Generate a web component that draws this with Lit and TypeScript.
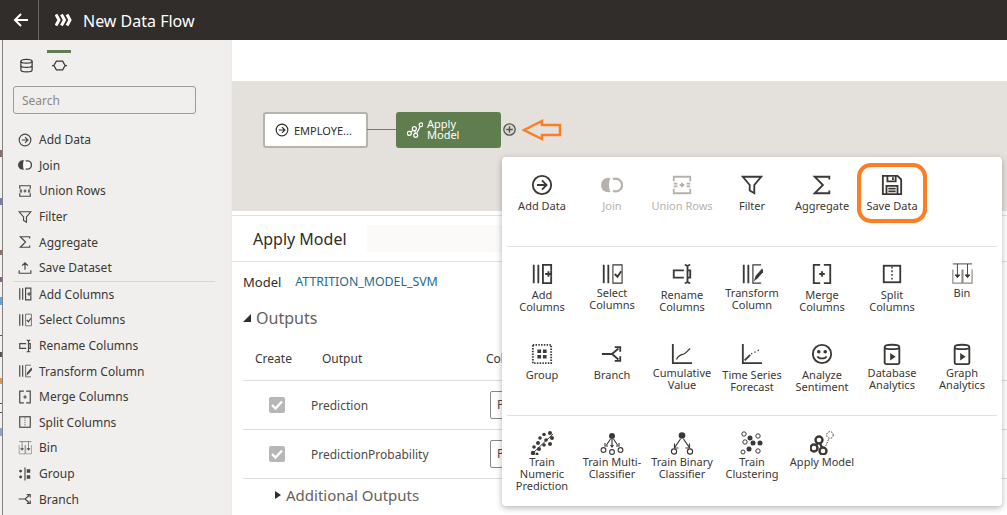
import { LitElement, html, css, svg } from "lit";
import { customElement } from "lit/decorators.js";

const ICONS: Record<string, unknown> = {
    addData: svg`<circle cx="12" cy="12" r="10" /><path d="M6.500 12h10M12 7l5 5-5 5" />`,
    join: svg`<circle cx="8" cy="12" r="8" fill="currentColor" stroke="none" /><circle cx="16" cy="12" r="7" fill="#fff" stroke-width="2.400" /><ellipse cx="11.500" cy="12" rx="2.800" ry="8" fill="#fff" stroke="none" />`,
    union: svg`<path d="M3 8V3h18v5M3 16v5h18v-5M3 10.500h4M17 10.500h4M3 13.500h4M17 13.500h4M12 9.500v5M9.500 12h5" />`,
    filter: svg`<path d="M2 3h20l-7.500 9v9l-5-3v-6z" />`,
    sigma: svg`<path d="M20 6V3H4l9 9-9 9h16v-3" />`,
    save: svg`<path d="M3 2h15l4 4v16H2V2zM7 2v6h9V2M13 3.500v3M6 22v-9h12v9M8 16h8M8 19h8" />`,
    upload: svg`<path d="M12 15V3M7 8l5-5 5 5M2 16v5h20v-5" />`,
    addColumns: svg`<path d="M3 2v20M8 2v20" /><path d="M22 8V2H13v20h9v-7" /><path d="M22 8v7M15.500 12h6M19 9v6" />`,
    selectColumns: svg`<path d="M3 2v20M8 2v20" /><path stroke-width="1.200" d="M13 2h10v20H13z" /><path d="M15 12l3 3 4-6" />`,
    renameColumns: svg`<path d="M14 8H3v8h11" /><path d="M15 2c1.500 0 3 1 3 2v16c0 1-1.500 2-3 2M21 2c-1.500 0-3 1-3 2v16c0 1 1.500 2 3 2" /><path d="M18 8h3v8h-3" />`,
    transformColumn: svg`<path d="M3 2v20M8 2v20" /><path stroke-width="1.300" d="M22 2H13v20h9" /><path d="M14 20l2-6 7-8 2 3-7 8z" fill="currentColor" stroke="none" />`,
    mergeColumns: svg`<path d="M10 2H3v20h7M14 2h7v20h-7M12 9v6M9 12h6" />`,
    splitColumns: svg`<rect x="3" y="3" width="18" height="18" /><path d="M12 4v16" stroke-width="1.600" stroke-dasharray="2 2" />`,
    bin: svg`<g stroke-width="1"><path d="M2 1h21M7 1v12M18 1v12" /><path d="M2 7v15h10V7M13 7v15h10V7" stroke="#8f8b87" stroke-width="1.300" /><path d="M4.500 13h5l-2.500 3zM15.500 13h5l-2.500 3z" fill="currentColor" /></g>`,
    group: svg`<rect x="2" y="2" width="20" height="20" stroke-dasharray="1.600 1.400" /><path d="M7 7h4v4H7zM13 7h4v4h-4zM7 13h4v4H7zM13 13h4v4h-4z" fill="currentColor" stroke="none" />`,
    groupSide: svg`<path d="M12 1v22" /><circle cx="4.500" cy="7" r="2.500" fill="currentColor" stroke="none" /><circle cx="4.500" cy="17" r="2.500" fill="currentColor" stroke="none" /><path d="M15 4h6v6h-6zM15 14h6v6h-6z" fill="currentColor" stroke="none" />`,
    branch: svg`<path d="M1 12h11l7-6M12 12l7 6M15 4.500h6v5M15 19.500h6v-5" />`,
    cumulative: svg`<path d="M2 1v21h21" /><path stroke-width="1.300" d="M6 18c2-5 5-5 8-6s4-4 7-6" />`,
    forecast: svg`<path d="M2 1v21h21" /><path d="M4 19l6-6" /><path d="M11 12l10-5" stroke-width="1.500" stroke-dasharray="1.500 2.500" />`,
    sentiment: svg`<circle cx="12" cy="12" r="10" /><circle cx="8.500" cy="9.500" r="1" fill="currentColor" /><circle cx="15.500" cy="9.500" r="1" fill="currentColor" /><path d="M7 14.500c1.500 3 8.500 3 10 0" />`,
    cylinderPlay: svg`<path d="M4 4.500c0-3.500 16-3.500 16 0V21a2 2 0 0 1-2 2H6a2 2 0 0 1-2-2zM4 4.500c0 3 16 3 16 0" /><path d="M10 11l6 4-6 4z" fill="currentColor" stroke="none" />`,
    database: svg`<ellipse cx="12" cy="5" rx="9" ry="3" /><path d="M3 5v14c0 4 18 4 18 0V5M3 12c0 4 18 4 18 0" />`,
    process: svg`<path d="M7 5h10l4 7-4 7H7l-4-7zM0 12h3M21 12h3" />`,
    numeric: svg`<path d="M3 22L23 3" stroke-width="1" /><g fill="currentColor" stroke="none"><circle cx="20" cy="2" r="2" /><circle cx="14" cy="3.500" r="1.800" /><circle cx="22" cy="7" r="2" /><circle cx="10" cy="7" r="1.800" /><circle cx="16" cy="9" r="1.800" /><circle cx="8" cy="12" r="2" /><circle cx="20" cy="13" r="2" /><circle cx="14" cy="14" r="1.800" /><circle cx="4" cy="16" r="1.800" /><circle cx="9" cy="18" r="2" /><circle cx="3" cy="22" r="2.200" /><circle cx="7" cy="23" r="1.500" /></g>`,
    multi: svg`<circle cx="12" cy="5" r="3" fill="currentColor" stroke="none" /><g stroke-width="1.100"><path d="M12 8v8M10.500 8l-4 6M13.500 8l4 6M5 12v3h3M16 15h3v-3M10.500 14l1.500 2 1.500-2" /><circle cx="3.500" cy="19" r="2.400" /><circle cx="12" cy="21" r="2.400" /><circle cx="20.500" cy="19" r="2.400" /></g>`,
    binary: svg`<circle cx="12" cy="4.500" r="3.300" fill="currentColor" stroke="none" /><g stroke-width="1.200"><path d="M10.500 8L5 16M13.500 8l5.500 8M4.500 12.500V17h4M15.500 17h4v-4.500" /><circle cx="4" cy="20.500" r="2.600" /><circle cx="20" cy="20.500" r="2.600" /></g>`,
    clustering: svg`<g stroke-width="1"><circle cx="4" cy="3" r="2.200" /><circle cx="18" cy="5" r="2.200" /><circle cx="5" cy="11" r="2.200" /><circle cx="3" cy="21" r="2" /><circle cx="18" cy="20" r="2.200" /></g><g fill="currentColor" stroke="none"><circle cx="10" cy="7" r="2.500" /><circle cx="13" cy="12" r="2.500" /><circle cx="20" cy="12" r="2.500" /><circle cx="9" cy="18" r="2.500" /></g>`,
    applyModel: svg`<g stroke-width="2.400"><circle cx="9" cy="9" r="3.500" /><circle cx="4" cy="17" r="3.500" /><circle cx="13" cy="20" r="3.500" /><path d="M7.500 12.500l-1.500 1.500M10 12.500l2 4" /></g><circle cx="20" cy="4" r="3.300" stroke-width="1" stroke-dasharray="1.500 1.200" /><path d="M18.500 8.500l-3 7" stroke-width="1" stroke-dasharray="1.500 1.200" />`,
    nodeModel: svg`<g stroke-width="1.800"><circle cx="11" cy="10" r="3" /><circle cx="3.500" cy="17" r="3" /><circle cx="13" cy="20" r="3" /><circle cx="21" cy="4" r="2.800" /><path d="M9 12.500l-3.500 2.500M11.500 13l1 4M14 18l6-11.500" /></g>`,
};

const icon = (name: string) =>
    html`<svg class="ic" viewBox="0 0 24 24" fill="none" stroke="currentColor" stroke-width="2">${ICONS[name]}</svg>`;

const SIDE_TOP = [
    ["addData", "Add Data"],
    ["join", "Join"],
    ["union", "Union Rows"],
    ["filter", "Filter"],
    ["sigma", "Aggregate"],
    ["upload", "Save Dataset"],
];

const SIDE_BOTTOM = [
    ["addColumns", "Add Columns"],
    ["selectColumns", "Select Columns"],
    ["renameColumns", "Rename Columns"],
    ["transformColumn", "Transform Column"],
    ["mergeColumns", "Merge Columns"],
    ["splitColumns", "Split Columns"],
    ["bin", "Bin"],
    ["groupSide", "Group"],
    ["branch", "Branch"],
];

// [icon, label, flag]
const STEPS_A = [
    ["addData", "Add Data"],
    ["join", "Join", "off"],
    ["union", "Union Rows", "off"],
    ["filter", "Filter"],
    ["sigma", "Aggregate"],
    ["save", "Save Data"],
];

const STEPS_B = [
    ["addColumns", "Add\nColumns"],
    ["selectColumns", "Select\nColumns", "lift"],
    ["renameColumns", "Rename\nColumns"],
    ["transformColumn", "Transform\nColumn", "lift"],
    ["mergeColumns", "Merge\nColumns"],
    ["splitColumns", "Split\nColumns"],
    ["bin", "Bin", "lift"],
    ["group", "Group"],
    ["branch", "Branch"],
    ["cumulative", "Cumulative\nValue", "lift"],
    ["forecast", "Time Series\nForecast"],
    ["sentiment", "Analyze\nSentiment"],
    ["cylinderPlay", "Database\nAnalytics", "lift"],
    ["cylinderPlay", "Graph\nAnalytics", "lift"],
];

const STEPS_C = [
    ["numeric", "Train\nNumeric\nPrediction"],
    ["multi", "Train Multi-\nClassifier"],
    ["binary", "Train Binary\nClassifier"],
    ["clustering", "Train\nClustering"],
    ["applyModel", "Apply Model"],
];

const checkMark = html`<div class="check">
    <svg class="ic" viewBox="0 0 16 16" fill="none" stroke="currentColor" stroke-width="2.400"><path d="M3 8l3.500 3.500L13 4.500" /></svg>
</div>`;

@customElement("app-root")
export class AppRoot extends LitElement {
    static styles = css`
        :host {
            display: block;
            position: relative;
            width: 1007px;
            height: 515px;
            overflow: hidden;
            background: #fff;
            font-family: "Noto Sans", sans-serif;
            color: #312d2a;
        }
        .ic {
            display: block;
            width: 100%;
            height: 100%;
        }
        .header {
            height: 40px;
            background: #312d2a;
            color: #fff;
            display: flex;
            align-items: center;
        }
        .back {
            width: 39px;
            height: 40px;
            box-sizing: border-box;
            border-right: 1px solid #6b6764;
            padding-left: 3px;
            display: flex;
            align-items: center;
            justify-content: center;
        }
        .back svg {
            width: 16px;
            height: 16px;
        }
        .logo {
            width: 17px;
            height: 14px;
            margin: 0 11px 0 16px;
        }
        .title {
            font-size: 16px;
            padding-top: 1px;
        }
        .body {
            display: flex;
            height: 475px;
        }
        /* sliver of the page behind the drawer */
        .strip {
            width: 3px;
            box-sizing: border-box;
            border-right: 1px solid #85827f;
            background:
                linear-gradient(#8f6a6a, #8f6a6a) 0 110px / 2px 7px no-repeat,
                linear-gradient(#6f7fb0, #6f7fb0) 0 158px / 2px 7px no-repeat,
                linear-gradient(#8a7568, #8a7568) 0 210px / 2px 5px no-repeat,
                linear-gradient(#86608f, #86608f) 0 237px / 2px 5px no-repeat,
                linear-gradient(#5fa3d8, #5fa3d8) 0 257px / 2px 8px no-repeat,
                linear-gradient(#555, #555) 0 295px / 2px 1px no-repeat,
                linear-gradient(#555, #555) 0 312px / 2px 5px no-repeat,
                linear-gradient(#d59a5a, #d59a5a) 0 338px / 2px 6px no-repeat,
                linear-gradient(#555, #555) 0 363px / 2px 1px no-repeat,
                linear-gradient(#555, #555) 0 372px / 2px 1px no-repeat,
                linear-gradient(#8aa6cf, #8aa6cf) 0 388px / 2px 8px no-repeat,
                #f1f0ee;
        }
        .side {
            width: 229px;
            background: #f1efed;
            box-sizing: border-box;
            border-right: 1px solid #e6ebf0;
            padding: 10px 0 0 10px;
        }
        .tabs {
            display: flex;
            height: 36px;
            padding-left: 1px;
        }
        .tab {
            width: 24px;
            margin-right: 9px;
            box-sizing: border-box;
            padding-top: 4px;
            border-top: 3px solid transparent;
            display: flex;
            justify-content: center;
            color: #3b3835;
        }
        .tab.on {
            border-top-color: #5f7d4f;
        }
        .tab span {
            width: 15px;
            height: 15px;
            margin-top: 1px;
        }
        .search {
            width: 183px;
            height: 28px;
            box-sizing: border-box;
            border: 1px solid #9e9a96;
            border-radius: 3px;
            padding-left: 8px;
            font-size: 12px;
            line-height: 28px;
            color: #8b8783;
        }
        .menu {
            margin-top: 13px;
            width: 202px;
        }
        .menu.low {
            border-top: 1px solid #d9d6d2;
            margin-top: 0;
        }
        .row {
            height: 25.6px;
            display: flex;
            align-items: center;
            padding-left: 5px;
            font-size: 12px;
            color: #3b3835;
        }
        .row span {
            width: 14px;
            height: 14px;
            margin-right: 7px;
            flex: none;
            color: #4a4642;
        }
        .main {
            flex: 1;
            min-width: 0;
        }
        .blank {
            height: 41px;
        }
        .canvas {
            position: relative;
            height: 130px;
            background: #e4e1dd;
        }
        .node {
            position: absolute;
            top: 31px;
            height: 36px;
            width: 105px;
            box-sizing: border-box;
            display: flex;
            align-items: center;
            border-radius: 3px;
            font-size: 11px;
        }
        .source {
            left: 31px;
            background: #fff;
            border: 2px solid #b5b2ab;
            padding-left: 10px;
        }
        .source span {
            width: 14px;
            height: 14px;
            margin-right: 5px;
        }
        .model {
            left: 164px;
            background: #5f7d4f;
            color: #fff;
            padding-left: 11px;
            line-height: 11px;
        }
        .model span {
            width: 16px;
            height: 16px;
            margin-right: 4px;
        }
        .model div {
            padding-bottom: 2px;
        }
        .link {
            position: absolute;
            left: 135px;
            top: 48px;
            width: 29px;
            height: 1px;
            background: #7a7672;
        }
        .plus {
            position: absolute;
            left: 271px;
            top: 42px;
            width: 13px;
            height: 13px;
            color: #55524f;
        }
        .panel {
            margin-top: 4px;
            border-top: 1px solid #e4e1dd;
        }
        .panel-tabs {
            height: 46px;
            box-sizing: border-box;
            border-bottom: 1px solid #e4e1dd;
            display: flex;
            align-items: center;
            padding-left: 21px;
            font-size: 16px;
        }
        .panel-tabs i {
            margin-left: 20px;
            width: 136px;
            height: 27px;
            background: #fbfaf9;
        }
        .model-row {
            display: flex;
            margin-top: 10px;
            padding-left: 11px;
            font-size: 13px;
            line-height: 20px;
        }
        .model-row a {
            margin-left: 14px;
            font-size: 12.350px;
            color: #1f6b8c;
        }
        .outputs {
            display: flex;
            align-items: center;
            height: 24px;
            margin-top: 14px;
            padding-left: 11px;
            font-size: 16px;
            color: #665f5b;
        }
        .tri-down {
            width: 0;
            height: 0;
            border-style: solid;
            border-width: 0 0 8px 8px;
            border-color: transparent transparent #312d2a transparent;
            margin-right: 5px;
        }
        .table {
            margin: 15px 0 0 11px;
            font-size: 12px;
        }
        .tr {
            display: grid;
            grid-template-columns: 68px 175px 1fr;
            align-items: center;
            box-sizing: border-box;
            border-bottom: 1px solid #dfdcd8;
            height: 49px;
            color: #4f4a46;
        }
        .tr.head {
            grid-template-columns: 79px 164px 1fr;
            height: 36px;
            padding-bottom: 9px;
            color: #3b3835;
        }
        .tr.head span:first-child {
            padding-left: 12px;
        }
        .check {
            width: 16px;
            height: 16px;
            margin-left: 26px;
            border-radius: 2px;
            background: #b7b7b7;
            color: #fff;
        }
        .field {
            width: 60px;
            height: 28px;
            box-sizing: border-box;
            border: 1px solid #8b8783;
            border-radius: 2px;
            padding-left: 6px;
            line-height: 26px;
            margin-left: 4px;
        }
        .extra {
            display: flex;
            align-items: center;
            margin: 6px 0 0 43px;
            font-size: 15px;
            color: #665f5b;
        }
        .tri-right {
            width: 0;
            height: 0;
            border-style: solid;
            border-width: 4.500px 0 4.500px 6px;
            border-color: transparent transparent transparent #312d2a;
            margin-right: 5px;
        }
        .popup {
            position: absolute;
            left: 502px;
            top: 157px;
            width: 500px;
            height: 349px;
            background: #fff;
            border-radius: 4px;
            box-shadow: 0 2px 6px rgba(0, 0, 0, 0.3);
        }
        .sec {
            display: grid;
            grid-template-columns: repeat(7, 70px);
            margin: 0 5px;
            border-bottom: 1px solid #e4e1dd;
            justify-content: start;
            box-sizing: border-box;
        }
        .sec.a {
            height: 90px;
            padding-top: 16px;
        }
        .sec.b {
            height: 169px;
            padding-top: 15px;
            row-gap: 29px;
            align-content: start;
        }
        .sec.c {
            border: 0;
            padding-top: 15px;
        }
        .item {
            display: flex;
            flex-direction: column;
            align-items: center;
            color: #3b3835;
            font-size: 11px;
            line-height: 12px;
            text-align: center;
        }
        .item span {
            width: 22px;
            height: 22px;
            margin: 1px 0;
        }
        .item p {
            margin: 3px 0 0;
            width: 70px;
            white-space: pre-line;
        }
        .item.lift p {
            margin-top: 1px;
        }
        .sec.c .item span {
            width: 24px;
            height: 24px;
            margin: 0;
        }
        .sec.c .item p {
            margin-top: 1px;
        }
        .item.off {
            color: #b5b2af;
        }
        .mark {
            position: absolute;
            left: 857px;
            top: 163px;
            width: 70px;
            height: 60px;
            box-sizing: border-box;
            border: 4px solid #fb7e24;
            border-radius: 14px;
        }
        .arrow {
            position: absolute;
            left: 522px;
            top: 119px;
            width: 40px;
            height: 22px;
        }
    `;

    private side(items: string[][]) {
        return items.map(([name, label]) => html`<div class="row"><span>${icon(name)}</span>${label}</div>`);
    }

    private steps(items: string[][]) {
        return items.map(
            ([name, label, flag]) => html`<div class="item ${flag ?? ""}">
                <span>${icon(name)}</span>
                <p>${label}</p>
            </div>`
        );
    }

    render() {
        return html`
            <div class="header">
                <div class="back">
                    <svg viewBox="0 0 16 16" fill="none" stroke="currentColor" stroke-width="2">
                        <path d="M15 8H2M8 2L2 8l6 6" />
                    </svg>
                </div>
                <svg class="logo" viewBox="0 0 17 14" fill="none" stroke="currentColor" stroke-width="3">
                    <path d="M1 1.500L4 7l-3 5.500M6.500 1.500L9.500 7l-3 5.500M12 1.500L15 7l-3 5.500" />
                </svg>
                <div class="title">New Data Flow</div>
            </div>
            <div class="body">
                <div class="strip"></div>
                <div class="side">
                    <div class="tabs">
                        <div class="tab"><span>${icon("database")}</span></div>
                        <div class="tab on"><span>${icon("process")}</span></div>
                    </div>
                    <div class="search">Search</div>
                    <div class="menu">${this.side(SIDE_TOP)}</div>
                    <div class="menu low">${this.side(SIDE_BOTTOM)}</div>
                </div>
                <div class="main">
                    <div class="blank"></div>
                    <div class="canvas">
                        <div class="node source"><span>${icon("addData")}</span>EMPLOYE...</div>
                        <div class="link"></div>
                        <div class="node model"><span>${icon("nodeModel")}</span><div>Apply<br />Model</div></div>
                        <div class="plus">
                            <svg class="ic" viewBox="0 0 24 24" fill="#d9d6d2" stroke="currentColor" stroke-width="2.400">
                                <circle cx="12" cy="12" r="10.500" /><path d="M6 12h12M12 6v12" />
                            </svg>
                        </div>
                    </div>
                    <div class="panel">
                        <div class="panel-tabs">Apply Model<i></i></div>
                        <div class="model-row">Model<a>ATTRITION_MODEL_SVM</a></div>
                        <div class="outputs"><div class="tri-down"></div>Outputs</div>
                        <div class="table">
                            <div class="tr head"><span>Create</span><span>Output</span><span>Column</span></div>
                            <div class="tr">${checkMark}<span>Prediction</span><div class="field">Prediction</div></div>
                            <div class="tr">${checkMark}<span>PredictionProbability</span><div class="field">Prediction</div></div>
                        </div>
                        <div class="extra"><div class="tri-right"></div>Additional Outputs</div>
                    </div>
                </div>
            </div>
            <div class="popup">
                <div class="sec a">${this.steps(STEPS_A)}</div>
                <div class="sec b">${this.steps(STEPS_B)}</div>
                <div class="sec c">${this.steps(STEPS_C)}</div>
            </div>
            <div class="mark"></div>
            <svg class="arrow" viewBox="0 0 40 22" fill="none" stroke="#fb7e24" stroke-width="2.500">
                <path d="M2 11L20 2v4h18v10H20v4z" />
            </svg>
        `;
    }
}
